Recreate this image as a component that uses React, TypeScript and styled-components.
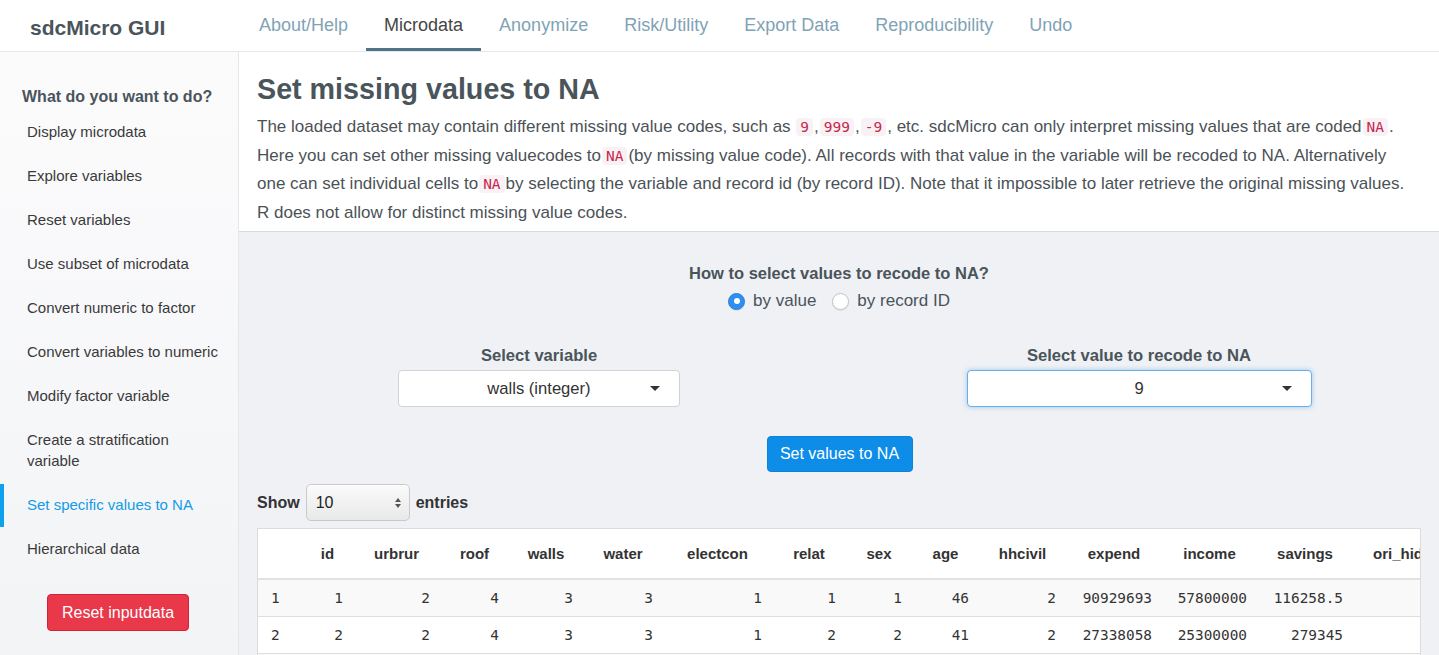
import React from "react";
import styled, { createGlobalStyle } from "styled-components";

const Global = createGlobalStyle`
  html, body { margin: 0; padding: 0; height: 100%; overflow: hidden; }
  body { font-family: "Liberation Sans", Arial, Helvetica, sans-serif; color: #333; background: #fff; }
  #root { height: 100%; }
  * { box-sizing: border-box; }
`;

const Page = styled.div`
  display: flex;
  flex-direction: column;
  height: 100vh;
  overflow: hidden;
`;

const Header = styled.header`
  display: flex;
  height: 52px;
  flex-shrink: 0;
  background: #fff;
  border-bottom: 1px solid #e6e8ea;
`;

const Brand = styled.div`
  width: 241px;
  padding: 4px 0 0 30px;
  display: flex;
  align-items: center;
  font-weight: bold;
  font-size: 21px;
  color: #4a545b;
`;

const Nav = styled.nav`
  display: flex;
`;

const NavItem = styled.div<{ $active?: boolean }>`
  display: flex;
  align-items: center;
  padding: 2px 18px 0;
  font-size: 18px;
  color: ${(p) => (p.$active ? "#454545" : "#7fa3b6")};
  border-bottom: 3px solid ${(p) => (p.$active ? "#4f7389" : "transparent")};
`;

const Body = styled.div`
  flex: 1;
  display: flex;
  min-height: 0;
`;

const Sidebar = styled.aside`
  width: 239px;
  flex-shrink: 0;
  background: linear-gradient(180deg, #fbfbfc 0%, #f3f4f6 100%);
  border-right: 1px solid #e4e8eb;
  display: flex;
  flex-direction: column;
`;

const SideHeading = styled.div`
  margin: 35px 0 3px 22px;
  font-weight: bold;
  font-size: 16px;
  line-height: 20px;
  color: #4a545b;
`;

const SideItem = styled.div<{ $active?: boolean }>`
  position: relative;
  padding: 11px 15px 12px 27px;
  font-size: 15px;
  line-height: 21px;
  color: ${(p) => (p.$active ? "#139be6" : "#3a3a3a")};
  &::before {
    content: "";
    position: absolute;
    left: 0;
    top: 1px;
    bottom: 0;
    width: 4px;
    background: ${(p) => (p.$active ? "#0ea2ec" : "transparent")};
  }
`;

const DangerButton = styled.button`
  align-self: center;
  margin: 23px 0 0 -2px;
  width: 142px;
  height: 37px;
  background: #e8384a;
  border: 1px solid #d42339;
  border-radius: 4px;
  color: #fff;
  font-family: inherit;
  font-size: 16px;
`;

const Main = styled.main`
  flex: 1;
  min-width: 0;
  display: flex;
  flex-direction: column;
  background: #eff1f5;
`;

const Intro = styled.section`
  background: #fff;
  padding: 20px 18px 5px;
  border-bottom: 1px solid #d9dcdf;
`;

const Title = styled.h1`
  margin: 0 0 7px;
  font-size: 28.7px;
  line-height: 34px;
  font-weight: bold;
  color: #4a545b;
`;

const Para = styled.p`
  margin: 0;
  font-size: 17px;
  line-height: 27.5px;
  color: #4b5257;
  white-space: nowrap;
`;

const Code = styled.code`
  font-family: "DejaVu Sans Mono", "Liberation Mono", monospace;
  font-size: 14.5px;
  color: #c7254e;
  background: #f9f2f4;
  border-radius: 4px;
  padding: 1px 4px;
  margin: 0 1px;
`;

const Question = styled.div`
  margin-top: 31px;
  text-align: center;
  font-weight: bold;
  font-size: 16.5px;
  line-height: 20px;
  color: #4a545b;
`;

const RadioRow = styled.div`
  display: flex;
  justify-content: center;
  gap: 16px;
  margin-top: 8px;
  height: 20px;
  align-items: center;
`;

const RadioLabel = styled.label`
  display: flex;
  align-items: center;
  gap: 8px;
  font-size: 17px;
  color: #4a545b;
`;

const RadioDot = styled.span<{ $checked?: boolean }>`
  width: 17px;
  height: 17px;
  border-radius: 50%;
  display: inline-flex;
  align-items: center;
  justify-content: center;
  background: ${(p) => (p.$checked ? "#2f8ef0" : "#fff")};
  border: 1px solid ${(p) => (p.$checked ? "#2a82e0" : "#c4c4c4")};
  box-shadow: 0 1px 1px rgba(0, 0, 0, 0.08);
  &::after {
    content: "";
    width: 6px;
    height: 6px;
    border-radius: 50%;
    background: ${(p) => (p.$checked ? "#fff" : "transparent")};
  }
`;

const SelectRow = styled.div`
  display: grid;
  grid-template-columns: 1fr 1fr;
  margin-top: 35px;
`;

const Field = styled.div`
  display: flex;
  flex-direction: column;
  align-items: center;
`;

const FieldLabel = styled.div`
  font-weight: bold;
  font-size: 16.6px;
  line-height: 20px;
  color: #4a545b;
  margin-bottom: 4px;
`;

const SelectBox = styled.div<{ $width: number; $focus?: boolean }>`
  position: relative;
  width: ${(p) => p.$width}px;
  height: 37px;
  background: #fff;
  border: 1px solid ${(p) => (p.$focus ? "#66afe9" : "#cfd3d6")};
  border-radius: 4px;
  box-shadow: ${(p) => (p.$focus ? "0 0 5px rgba(102,175,233,0.6)" : "none")};
  display: flex;
  align-items: center;
  justify-content: center;
  font-size: 16.6px;
  color: #333;
`;

const Caret = styled.span`
  position: absolute;
  right: 19px;
  top: 15px;
  width: 0;
  height: 0;
  border-left: 5px solid transparent;
  border-right: 5px solid transparent;
  border-top: 5px solid #333;
`;

const ButtonRow = styled.div`
  display: flex;
  justify-content: center;
  margin-top: 29px;
  padding-left: 1px;
`;

const PrimaryButton = styled.button`
  width: 146px;
  height: 36px;
  background: #0d8de8;
  border: 1px solid #0a82d8;
  border-radius: 4px;
  color: #fff;
  font-family: inherit;
  font-size: 16px;
`;

const TableArea = styled.div`
  padding: 12px 18px 0;
  display: flex;
  flex-direction: column;
  min-height: 0;
`;

const LengthRow = styled.div`
  display: flex;
  align-items: center;
  gap: 6px;
  font-weight: bold;
  font-size: 16px;
  color: #333;
`;

const LengthSelect = styled.div`
  position: relative;
  width: 104px;
  height: 37px;
  border: 1px solid #c9c9c9;
  border-radius: 5px;
  background: linear-gradient(180deg, #fafafa 0%, #e9e9e9 100%);
  box-shadow: inset 0 1px 0 #fff;
  display: flex;
  align-items: center;
  padding-left: 9px;
  font-weight: normal;
  font-size: 16px;
  color: #222;
`;

const Spinner = styled.span`
  position: absolute;
  right: 8px;
  top: 13px;
  display: flex;
  flex-direction: column;
  gap: 2px;
  &::before,
  &::after {
    content: "";
    width: 0;
    height: 0;
    border-left: 3px solid transparent;
    border-right: 3px solid transparent;
  }
  &::before { border-bottom: 4px solid #555; }
  &::after { border-top: 4px solid #555; }
`;

const TableCard = styled.div`
  margin-top: 7px;
  background: #fff;
  border: 1px solid #dcdcdc;
  border-bottom: none;
  overflow: hidden;
`;

const Table = styled.table`
  border-collapse: collapse;
  table-layout: fixed;
  width: 1185px;
`;

const Th = styled.th`
  height: 50px;
  padding: 0 8px;
  font-size: 15px;
  font-weight: bold;
  color: #333;
  text-align: center;
  white-space: nowrap;
  border-bottom: 2px solid #e2e2e2;
`;

const Tr = styled.tr<{ $odd?: boolean }>`
  background: ${(p) => (p.$odd ? "#f9f9f9" : "#fff")};
`;

const Td = styled.td<{ $left?: boolean }>`
  height: 37px;
  padding: 0 10px 0 ${(p) => (p.$left ? "13px" : "10px")};
  text-align: ${(p) => (p.$left ? "left" : "right")};
  font-family: "DejaVu Sans Mono", "Liberation Mono", monospace;
  font-size: 14.4px;
  color: #333;
  white-space: nowrap;
  border-bottom: 1px solid #dedede;
`;

const columns: { name: string; width: number }[] = [
  { name: "", width: 44 },
  { name: "id", width: 51 },
  { name: "urbrur", width: 87 },
  { name: "roof", width: 69 },
  { name: "walls", width: 74 },
  { name: "water", width: 80 },
  { name: "electcon", width: 109 },
  { name: "relat", width: 74 },
  { name: "sex", width: 66 },
  { name: "age", width: 67 },
  { name: "hhcivil", width: 87 },
  { name: "expend", width: 96 },
  { name: "income", width: 95 },
  { name: "savings", width: 96 },
  { name: "ori_hid", width: 90 },
];

const rows: string[][] = [
  ["1", "1", "2", "4", "3", "3", "1", "1", "1", "46", "2", "90929693", "57800000", "116258.5", ""],
  ["2", "2", "2", "4", "3", "3", "1", "2", "2", "41", "2", "27338058", "25300000", "279345", ""],
  ["", "", "", "", "", "", "", "", "", "", "", "", "", "", ""],
];

const sideItems = [
  "Display microdata",
  "Explore variables",
  "Reset variables",
  "Use subset of microdata",
  "Convert numeric to factor",
  "Convert variables to numeric",
  "Modify factor variable",
  "Create a stratification variable",
  "Set specific values to NA",
  "Hierarchical data",
];

const navItems = ["About/Help", "Microdata", "Anonymize", "Risk/Utility", "Export Data", "Reproducibility", "Undo"];

export default function App() {
  return (
    <Page>
      <Global />
      <Header>
        <Brand>sdcMicro GUI</Brand>
        <Nav>
          {navItems.map((n) => (
            <NavItem key={n} $active={n === "Microdata"}>
              {n}
            </NavItem>
          ))}
        </Nav>
      </Header>
      <Body>
        <Sidebar>
          <SideHeading>What do you want to do?</SideHeading>
          {sideItems.map((s) => (
            <SideItem key={s} $active={s === "Set specific values to NA"}>
              {s}
            </SideItem>
          ))}
          <DangerButton>Reset inputdata</DangerButton>
        </Sidebar>
        <Main>
          <Intro>
            <Title>Set missing values to NA</Title>
            <Para>
              The loaded dataset may contain different missing value codes, such as <Code>9</Code>,
              <Code>999</Code>,<Code>-9</Code>, etc. sdcMicro can only interpret missing values that are coded
              <Code>NA</Code>.
              <br />
              Here you can set other missing valuecodes to<Code>NA</Code>(by missing value code). All records with
              that value in the variable will be recoded to NA. Alternatively
              <br />
              one can set individual cells to<Code>NA</Code>by selecting the variable and record id (by record ID).
              Note that it impossible to later retrieve the original missing values.
              <br />R does not allow for distinct missing value codes.
            </Para>
          </Intro>
          <Question>How to select values to recode to NA?</Question>
          <RadioRow>
            <RadioLabel>
              <RadioDot $checked />
              by value
            </RadioLabel>
            <RadioLabel>
              <RadioDot />
              by record ID
            </RadioLabel>
          </RadioRow>
          <SelectRow>
            <Field>
              <FieldLabel>Select variable</FieldLabel>
              <SelectBox $width={282}>
                walls (integer)
                <Caret />
              </SelectBox>
            </Field>
            <Field>
              <FieldLabel>Select value to recode to NA</FieldLabel>
              <SelectBox $width={345} $focus>
                9
                <Caret />
              </SelectBox>
            </Field>
          </SelectRow>
          <ButtonRow>
            <PrimaryButton>Set values to NA</PrimaryButton>
          </ButtonRow>
          <TableArea>
            <LengthRow>
              Show
              <LengthSelect>
                10
                <Spinner />
              </LengthSelect>
              entries
            </LengthRow>
            <TableCard>
              <Table>
                <colgroup>
                  {columns.map((c, i) => (
                    <col key={i} style={{ width: c.width }} />
                  ))}
                </colgroup>
                <thead>
                  <tr>
                    {columns.map((c, i) => (
                      <Th key={i}>{c.name}</Th>
                    ))}
                  </tr>
                </thead>
                <tbody>
                  {rows.map((r, ri) => (
                    <Tr key={ri} $odd={ri % 2 === 0}>
                      {r.map((v, ci) => (
                        <Td key={ci} $left={ci === 0}>
                          {v}
                        </Td>
                      ))}
                    </Tr>
                  ))}
                </tbody>
              </Table>
            </TableCard>
          </TableArea>
        </Main>
      </Body>
    </Page>
  );
}
